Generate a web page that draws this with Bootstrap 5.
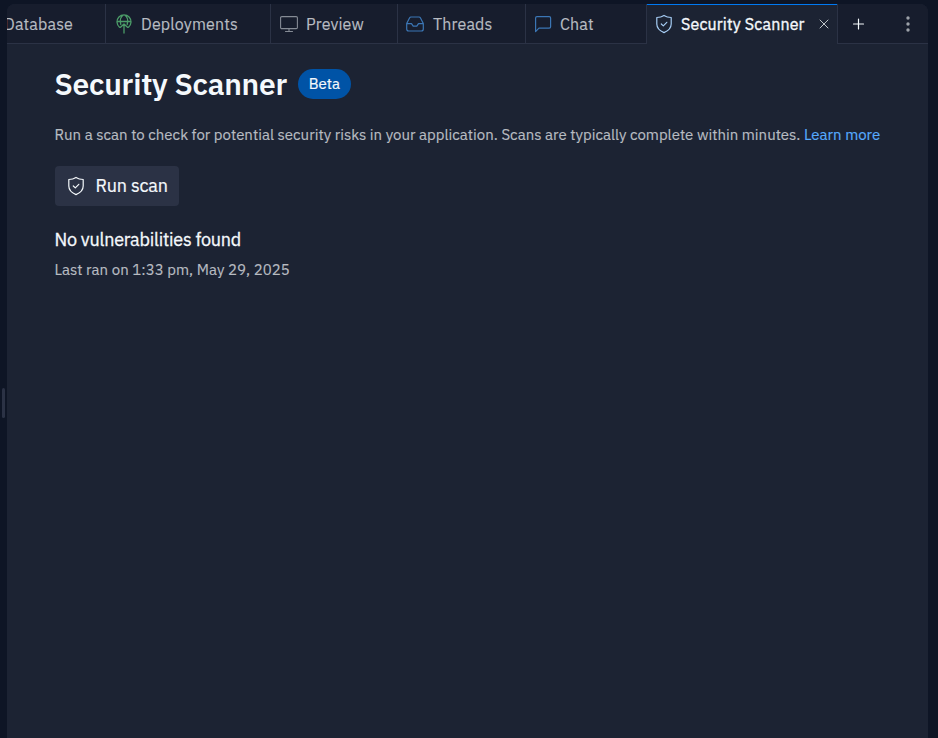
<!DOCTYPE html>
<html lang="en">
<head>
<meta charset="utf-8">
<meta name="viewport" content="width=device-width, initial-scale=1">
<title>Security Scanner</title>
<link href="https://cdn.jsdelivr.net/npm/bootstrap@5.3.0/dist/css/bootstrap.min.css" rel="stylesheet">
<style>
body{background:#0e1525;color:#f5f9fc;font-family:"IBM Plex Sans",Roboto,"Noto Sans",sans-serif;font-size:16px;height:100vh}
svg{display:block;flex:none;fill:none;stroke:currentColor;stroke-linecap:round;stroke-linejoin:round}
.splitter{width:7px;padding-top:68px}
.grip{width:3px;height:30px;margin-left:1.5px;background:#2b3245;border-radius:2px}
.pane{margin:4px 10px 0 0;background:#1c2333;border-radius:8px 8px 0 0}
.tabs{height:40px;background:#171d2d}
.tab{color:#b8bcc2;border-right:1px solid #2b3245;border-bottom:1px solid #2b3245;padding:0 0 0 9px;gap:8px;letter-spacing:.15px;line-height:40px;-webkit-text-stroke:.15px}
.tab svg{color:#3b76b5}
.t-db{width:99px;padding-left:0}
.t-db span{margin-left:-3px}
.t-dep{width:165px}
.t-pre{width:127px}
.t-thr{width:128px;padding-left:8px;gap:9px}
.t-chat{width:121px;padding-left:8px}
.t-sec{width:191px;padding-left:8px;border-bottom:0;background:#1c2333;color:#f5f9fc;box-shadow:inset 0 1px #0079f2,-1px 0 #2b3245;letter-spacing:.15px;-webkit-text-stroke:.35px}
.t-sec .shield{color:#a6cdf5}
.t-end{border-bottom:1px solid #2b3245;padding:0 13px 0 12px}
.content{padding:20px 47.500px}
h1{font-size:30px;line-height:40px;font-weight:600;letter-spacing:-.25px}
.beta{background:#0053a6;width:53px;height:30px;font-size:15px;margin-left:11px;padding-top:1px;-webkit-text-stroke:.2px}
.desc{font-size:15px;line-height:24px;margin-top:19px;color:#b8bcc2;-webkit-text-stroke:.15px}
.desc a{color:#57abff}
.run{background:#2b3245;color:#f5f9fc;width:124.500px;height:40px;margin-top:19px;border-radius:4px;font-size:18px;padding:0 12px 1px;gap:11px;letter-spacing:-.2px;-webkit-text-stroke:.2px}
.found{font-size:18px;line-height:24px;margin-top:22px;letter-spacing:-.23px;-webkit-text-stroke:.3px}
.last{font-size:15px;line-height:24px;margin-top:6px;color:#b8bcc2;letter-spacing:.02px;-webkit-text-stroke:.15px}
</style>
</head>
<body class="d-flex overflow-hidden">
<div class="splitter d-flex align-items-center flex-shrink-0"><div class="grip"></div></div>
<main class="pane flex-grow-1 overflow-hidden">
<nav class="tabs d-flex text-nowrap">
<div class="tab t-db d-flex align-items-center overflow-hidden"><span>Database</span></div>
<div class="tab t-dep d-flex align-items-center">
<svg width="18" height="22" viewBox="0 0 18 22" style="color:#4b9b68" stroke-width="1.300"><path d="M4.500 14.200A7 7 0 1 1 13.500 14.200M2 8.500H16M5.800 11.500C4.600 7.500 5.600 3.500 9 1.700C12.400 3.500 13.400 7.500 12.200 11.500M9 20V11M5.500 14.300L9 11L12.500 14.300"/></svg><span>Deployments</span></div>
<div class="tab t-pre d-flex align-items-center">
<svg width="18" height="18" viewBox="0 0 18 18" style="color:#858b95" stroke-width="1.100"><rect x=".6" y="1.600" width="16.800" height="12" rx="1.200"/><path d="M9 13.600V16.500M5.500 16.500H12.500"/></svg><span>Preview</span></div>
<div class="tab t-thr d-flex align-items-center">
<svg width="18" height="18" viewBox="0 0 18 18" stroke-width="1.200"><path d="M.7 8.600L3.500 3Q4 2 5 2H13Q14 2 14.500 3L17.300 8.600V14Q17.300 16 15.300 16H2.700Q.7 16 .7 14ZM.7 8.600H5.500L7.200 11.200H10.800L12.500 8.600H17.300"/></svg><span>Threads</span></div>
<div class="tab t-chat d-flex align-items-center">
<svg width="18" height="18" viewBox="0 0 18 18" stroke-width="1.200"><path d="M1.600 16.600V3Q1.600 1.600 3 1.600H15.200Q16.600 1.600 16.600 3V11.800Q16.600 13.200 15.200 13.200H5Z"/></svg><span>Chat</span></div>
<div class="tab t-sec d-flex align-items-center">
<svg class="shield" width="18" height="20" viewBox="0 0 18 20" stroke-width="1.200"><path d="M9 1.400Q12 3.300 16.200 3.500V10Q16.200 15.600 9 18.600Q1.800 15.600 1.800 10V3.500Q6 3.300 9 1.400ZM6.300 10L8.300 11.900L11.800 8.300"/></svg><span>Security Scanner</span>
<svg class="ms-auto me-2" style="color:#c2c8cc" width="10" height="10" viewBox="0 0 10 10" stroke-width="1"><path d="M1 1L9 9M9 1L1 9"/></svg></div>
<div class="t-end flex-grow-1 d-flex align-items-center justify-content-between">
<svg width="16" height="16" viewBox="0 0 16 16" stroke-width="1.200"><path d="M8.500 3V13M3.500 8H13.500"/></svg>
<svg width="14" height="18" viewBox="0 0 14 18" style="fill:#9da2a9;stroke:none"><circle cx="7" cy="3" r="1.700"/><circle cx="7" cy="9" r="1.700"/><circle cx="7" cy="15" r="1.700"/></svg></div>
</nav>
<section class="content">
<div class="d-flex align-items-center"><h1 class="m-0">Security Scanner</h1><span class="beta rounded-pill d-flex align-items-center justify-content-center">Beta</span></div>
<p class="desc mb-0 text-nowrap"><span>Run a scan to check for potential security risks in your application. Scans are typically complete within minutes.</span> <a href="#" class="text-decoration-none">Learn more</a></p>
<button class="run border-0 d-flex align-items-center text-nowrap"><svg width="18" height="20" viewBox="0 0 18 20" stroke-width="1.200"><path d="M9 1.400Q12 3.300 16.200 3.500V10Q16.200 15.600 9 18.600Q1.800 15.600 1.800 10V3.500Q6 3.300 9 1.400ZM6.300 10L8.300 11.900L11.800 8.300"/></svg><span>Run scan</span></button>
<div class="found"><span>No vulnerabilities found</span></div>
<div class="last"><span>Last ran on 1:33 pm, May 29, 2025</span></div>
</section>
</main>
<script src="https://cdn.jsdelivr.net/npm/bootstrap@5.3.0/dist/js/bootstrap.bundle.min.js"></script>
</body>
</html>
